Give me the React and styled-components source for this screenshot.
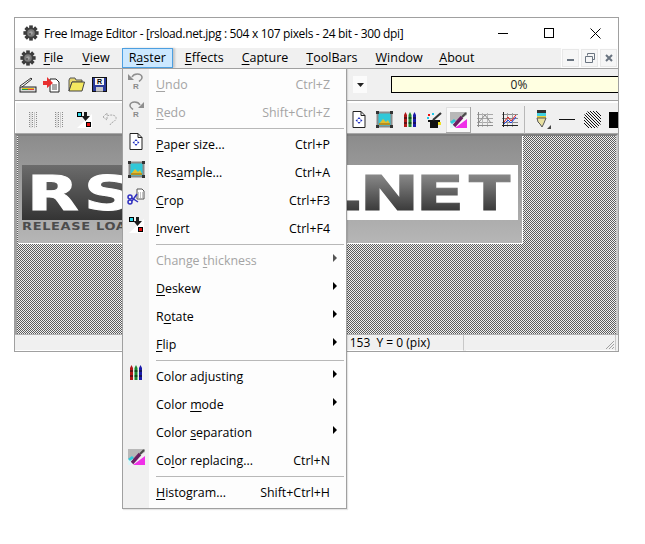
import React from "react";
import styled, { createGlobalStyle } from "styled-components";

const GlobalStyle = createGlobalStyle`
  html, body {
    margin: 0;
    padding: 0;
    background: #fff;
  }
  body {
    font-family: "Open Sans", "Noto Sans", sans-serif;
    font-size: 12px;
    color: #000;
    overflow: hidden;
  }
`;

const Page = styled.div`
  width: 645px;
  height: 544px;
  padding: 17px 0 0 14px;
  box-sizing: border-box;
  overflow: hidden;
  position: relative;
`;

const Window = styled.div`
  width: 605px;
  height: 335px;
  box-sizing: border-box;
  border: 1px solid #a0a0a0;
  display: flex;
  flex-direction: column;
  overflow: hidden;
  background: #f0f0f0;
`;

const TitleBar = styled.div`
  height: 30px;
  flex: none;
  background: #fff;
  display: flex;
  align-items: center;
  padding-left: 8px;
`;

const Title = styled.div`
  margin-left: 5px;
  flex: 1;
  white-space: nowrap;
  color: #000;
  letter-spacing: -0.34px;
`;

const CaptionButton = styled.div`
  width: 46px;
  height: 30px;
  display: flex;
  align-items: center;
  justify-content: center;
`;

const MenuBar = styled.div`
  height: 20px;
  flex: none;
  display: flex;
  align-items: center;
  background: #f0f0f0;
  padding-left: 5px;
  font-size: 12.5px;
`;

const MenuItem = styled.div`
  height: 20px;
  line-height: 19px;
  box-sizing: border-box;
  flex: none;
  padding: 0 9px;
  margin-left: ${(p) => p.$ml || 0}px;
  ${(p) =>
    p.$open &&
    `
    background: #cce8ff;
    border: 1px solid #4d9fe0;
    line-height: 18px;
    padding: 0 6px;
    margin: 0 3px;
    box-shadow: 2px 0 2px rgba(0,0,0,.18);
  `}
`;

const MdiGroup = styled.div`
  margin-left: auto;
  display: flex;
  gap: 2px;
  padding: 0 1px;
  height: 20px;
  align-items: center;
  background: #fdfdfd;
`;

const MdiButton = styled.div`
  width: 17px;
  height: 18px;
  box-sizing: border-box;
  border: 1px solid #e8e8e8;
  background: #f6f6f6;
  display: flex;
  align-items: center;
  justify-content: center;
`;

const Rule = styled.div`
  height: 1px;
  flex: none;
  background: #a0a0a0;
`;

const Toolbar = styled.div`
  height: 31px;
  flex: none;
  display: flex;
  align-items: center;
`;

const ToolPanel = styled.div`
  height: 34px;
  flex: none;
  box-sizing: border-box;
  display: flex;
  align-items: center;
  padding-top: 5px;
  border-top: 1px solid #a0a0a0;
  border-bottom: 1px solid #a8a8a8;
  box-shadow: inset 1px 2px 0 #fff;
`;

const Tool = styled.div`
  flex: none;
  margin-left: ${(p) => p.$ml || 0}px;
  width: ${(p) => p.$w || 16}px;
  height: ${(p) => p.$h || 16}px;
  display: flex;
  align-items: center;
  justify-content: center;
  ${(p) => p.$active && `background: #f9f9f9; box-shadow: inset -1px -1px 0 #a8a8a8, inset 1px 1px 0 #e0e0e0;`}
`;

const Combo = styled.div`
  flex: none;
  margin-left: 246px;
  width: 14px;
  height: 17px;
  background: #fbfbfb;
  display: flex;
  align-items: center;
  justify-content: center;
`;

const Progress = styled.div`
  flex: none;
  margin-left: 24px;
  width: 256px;
  height: 17px;
  box-sizing: border-box;
  border: 1px solid #000;
  background: #ffffe1;
  text-align: center;
  line-height: 15px;
  color: #222;
`;

const ToolDivider = styled.div`
  flex: none;
  width: 1px;
  height: 28px;
  background: #b8b8b8;
  margin-left: ${(p) => p.$ml}px;
`;

const Workspace = styled.div`
  flex: 1;
  min-height: 0;
  box-sizing: border-box;
  border-top: 2px solid #808080;
  border-left: 2px solid #a0a0a0;
  border-right: 2px solid #c8c8c8;
  background-color: #a6a6a6;
  background-image: repeating-conic-gradient(#5c5c5c 0% 25%, #f0f0f0 0% 50%);
  background-size: 2px 2px;
`;

const Picture = styled.svg`
  display: block;
  margin: 0 0 0 1px;
`;

const StatusBar = styled.div`
  height: 17px;
  flex: none;
  display: flex;
  border-top: 1px solid #b0b0b0;
  box-sizing: border-box;
  background: #f0f0f0;
`;

const StatusPane = styled.div`
  flex: ${(p) => (p.$grow ? 1 : "none")};
  width: ${(p) => p.$w || 0}px;
  margin-right: 2px;
  box-sizing: border-box;
  line-height: 15px;
  white-space: nowrap;
  text-align: right;
  padding-right: 33px;
  border-right: 1px solid #c8c8c8;
  border-bottom: 1px solid #fff;
  overflow: hidden;
  position: relative;
`;

const Grip = styled.svg`
  position: absolute;
  right: 0;
  bottom: 0;
`;

const Popup = styled.div`
  position: absolute;
  left: 122px;
  top: 68px;
  width: 225px;
  box-sizing: border-box;
  border: 1px solid #a0a0a0;
  padding: 2px 0 1px 0;
  font-size: 12.4px;
  background: linear-gradient(to right, #f0f0f0 26px, #fdfdfd 26px);
  box-shadow: 1px 1px 1px rgba(0, 0, 0, 0.1);
`;

const Row = styled.div`
  height: 28px;
  box-sizing: border-box;
  display: flex;
  align-items: center;
  position: relative;
  padding: 0 16px 2px 33px;
  color: ${(p) => (p.$disabled ? "#a4a4a4" : "#000")};
  white-space: nowrap;
`;

const RowIcon = styled.div`
  position: absolute;
  left: 4px;
  top: 1px;
  width: 18px;
  height: 18px;
  display: flex;
  align-items: center;
  justify-content: center;
`;

const Shortcut = styled.span`
  margin-left: auto;
`;

const Arrow = styled.span`
  position: absolute;
  right: 9px;
  top: 7px;
  width: 0;
  height: 0;
  border-left: 4px solid ${(p) => (p.$disabled ? "#555" : "#000")};
  border-top: 4px solid transparent;
  border-bottom: 4px solid transparent;
`;

const Separator = styled.div`
  height: 1px;
  margin: 1px 2px 2px 33px;
  background: #b8b8b8;
`;

const U = styled.span`
  text-decoration: underline;
  text-underline-offset: 2px;
  text-decoration-thickness: 1px;
`;

const Gear = () => {
  const teeth = [0, 45, 90, 135, 180, 225, 270, 315];
  return (
    <svg width="16" height="16" viewBox="0 0 16 16">
      {teeth.map((a) => (
        <rect key={a} x="6.2" y="0.4" width="3.6" height="4" fill="#3a3a3a" transform={`rotate(${a} 8 8)`} />
      ))}
      <circle cx="8" cy="8" r="5.6" fill="#3f3f3f" />
      <circle cx="8" cy="8" r="3.8" fill="#7c7c7c" />
      <circle cx="8" cy="8" r="1.8" fill="#a2a2a2" />
      <circle cx="7" cy="9" r="1" fill="#555" />
    </svg>
  );
};

const Scanner = () => (
  <svg width="18" height="16" viewBox="0 0 18 16">
    <path d="M1 9 L12 1 L13 2 L3 10" fill="#fff" stroke="#333" />
    <rect x="1" y="10" width="16" height="5" fill="#d8d8d8" stroke="#222" />
    <rect x="3" y="11" width="12" height="2" fill="#e8c020" />
    <rect x="3" y="12" width="6" height="1" fill="#20a040" />
    <rect x="9" y="12" width="6" height="1" fill="#e04040" />
  </svg>
);

const ImportDoc = () => (
  <svg width="18" height="17" viewBox="0 0 18 17">
    <path d="M7 3 H13 L16 6 V16 H7 Z" fill="#fff" stroke="#222" />
    <path d="M9 9 H14 M9 11 H14 M9 13 H14" stroke="#555" />
    <path d="M0 5 H4 V1 L10 7 L4 12 V9 H0 Z" fill="#e83030" />
  </svg>
);

const Folder = () => (
  <svg width="17" height="15" viewBox="0 0 17 15">
    <path d="M1 3 L2 1 H7 L8 3 H14 V5 H4 L1 14 Z" fill="#e8d870" stroke="#555" />
    <path d="M1 14 L4 5 H16.5 L14 14 Z" fill="#f4e860" stroke="#444" />
  </svg>
);

const Save = () => (
  <svg width="15" height="15" viewBox="0 0 15 15">
    <rect x="0.5" y="0.5" width="14" height="14" fill="#2a3a9a" stroke="#111" />
    <rect x="3" y="1" width="9" height="7" fill="#f4f4f4" />
    <text x="7.5" y="7" fontSize="7" fontWeight="700" textAnchor="middle" fontFamily="Liberation Sans">R</text>
    <rect x="4" y="10" width="7" height="4.5" fill="#c8c8c8" />
  </svg>
);

const Grips = () => (
  <svg width="10" height="16" viewBox="0 0 10 16">
    <path d="M1.5 0 V16 M4.5 0 V16 M8.5 0 V16" stroke="#8c8c8c" strokeDasharray="1 1" />
    <path d="M3 0 V16 M6.5 0 V16" stroke="#cccccc" />
  </svg>
);

const InvertIcon = () => (
  <svg width="15" height="16" viewBox="0 0 15 16">
    <path d="M0 16 L15 2 V16 Z" fill="#fff" />
    <rect x="0.5" y="0.5" width="4" height="4" fill="#30d8e8" stroke="#000" />
    <rect x="9.5" y="10.5" width="4" height="4" fill="#e81010" stroke="#000" />
    <path d="M7 0 H10 V4 H13 L8.5 9 L4.5 4 H7 Z" fill="#1a1a1a" />
  </svg>
);

const Lasso = () => (
  <svg width="16" height="15" viewBox="0 0 16 15">
    <path d="M1 5 L5 1 V4 C9 2 15 3 14 7 C13 10 9 10 8 13 M1 5 L5 8 V5" fill="none" stroke="#a8a8a8" strokeDasharray="2 1" />
  </svg>
);

const UndoIcon = ({ flip }) => (
  <svg width="18" height="18" viewBox="0 0 18 18">
    <g transform={flip ? "translate(18 0) scale(-1 1)" : undefined}>
      <path d="M5 5 C7 1 14 1 15 5 C15.4 7 14 8 12 9.5" fill="none" stroke="#8e8e8e" strokeWidth="1.5" />
      <path d="M1 2 L7 8 H1 Z" fill="#8e8e8e" />
    </g>
    <text x="9" y="17" fontSize="8" fontWeight="700" textAnchor="middle" fill="#8a8a8a" fontFamily="Liberation Sans">R</text>
  </svg>
);

const PageIcon = () => (
  <svg width="14" height="17" viewBox="0 0 14 17">
    <path d="M1 .5 H9 L13 4.5 V16.5 H1 Z M9 .5 V4.5 H13" fill="#fff" stroke="#222" />
    <path d="M7 6 L5.5 8 H8.5 Z M7 13 L5.5 11 H8.5 Z M3.5 9.5 L5.5 8 V11 Z M10.5 9.5 L8.5 8 V11 Z" fill="#2030c0" />
  </svg>
);

const ResampleIcon = () => (
  <svg width="17" height="17" viewBox="0 0 17 17">
    <rect x="1.5" y="1.5" width="14" height="14" fill="#30c8d8" stroke="#8a8a8a" strokeWidth="2" />
    <path d="M3 13 L7 8 L10 11 L12 9 L14 13 Z" fill="#e0c030" />
    <rect x="3" y="12" width="11" height="2" fill="#b89020" />
    <rect x="0" y="0" width="3" height="3" fill="#333" />
    <rect x="14" y="0" width="3" height="3" fill="#333" />
    <rect x="0" y="14" width="3" height="3" fill="#333" />
    <rect x="14" y="14" width="3" height="3" fill="#333" />
  </svg>
);

const Crayons = () => (
  <svg width="14" height="16" viewBox="0 0 14 16">
    <path d="M1 3 L2.5 0 L4 3 V15 H1 Z" fill="#b01818" />
    <path d="M5.5 3 L7 0 L8.5 3 V15 H5.5 Z" fill="#1a8a30" />
    <path d="M10 3 L11.5 0 L13 3 V15 H10 Z" fill="#1a1aaa" />
    <path d="M1 6 H4 M5.5 6 H8.5 M10 6 H13 M1 11 H4 M5.5 11 H8.5 M10 11 H13" stroke="#111" />
  </svg>
);

const Wand = () => (
  <svg width="15" height="16" viewBox="0 0 15 16">
    <rect x="3" y="9" width="8" height="7" fill="#111" />
    <rect x="1" y="8" width="12" height="2" fill="#111" />
    <path d="M6 8 L14 1" stroke="#333" strokeWidth="2.2" />
    <rect x="1" y="2" width="2" height="2" fill="#e81010" />
    <rect x="5" y="1" width="2" height="2" fill="#20c8e8" />
    <rect x="0" y="5" width="2" height="2" fill="#20c8e8" />
    <rect x="11" y="10" width="3" height="3" fill="#f0e020" />
  </svg>
);

const ColorReplace = () => (
  <svg width="17" height="16" viewBox="0 0 17 16">
    <path d="M0 0 H17 V3 L3 12 H0 Z" fill="#b8b8b8" />
    <path d="M0 10 H6 L3 16 H0 Z" fill="#dff6f8" />
    <path d="M0 10 L4 7 L6 9 L2 12 Z" fill="#30c8d8" />
    <path d="M5 16 L17 7 V16 Z" fill="#f030e8" />
    <path d="M4 14 L12 5" stroke="#6a1f62" strokeWidth="3.4" />
    <path d="M12 5 L16 1" stroke="#4a4a4a" strokeWidth="2" />
  </svg>
);

const GridIcon = ({ chart }) => (
  <svg width="16" height="15" viewBox="0 0 16 15">
    <path d="M0 2.5 H16 M0 6.5 H16 M0 10.5 H16" stroke={chart ? "#8a8a8a" : "#a8a8a8"} />
    <path d="M5.5 1 V15 M10.5 1 V15" stroke={chart ? "#a0a0a0" : "#b8b8b8"} />
    <path d="M0 13.5 H16" stroke={chart ? "#222" : "#8a8a8a"} />
    <path d="M1.5 0 V15" stroke={chart ? "#222" : "#8a8a8a"} />
    {chart ? (
      <>
        <path d="M2 10 L6 5 L9 9 L14 3" stroke="#e02020" fill="none" />
        <path d="M2 12 L6 8 L9 11 L14 5" stroke="#2040e0" fill="none" />
      </>
    ) : (
      <path d="M2 10 L8 3 L14 11" stroke="#8a8a8a" fill="none" />
    )}
  </svg>
);

const Brush = () => (
  <svg width="16" height="20" viewBox="0 0 16 20">
    <rect x="1" y="0" width="9" height="3" fill="#303030" />
    <rect x="1" y="3" width="9" height="3" fill="#40d0e0" />
    <rect x="1" y="6" width="9" height="2" fill="#e8d040" />
    <path d="M1 8 H10 L8 13 L6 17 L4 14 L2 12 Z" fill="#e8e0a0" stroke="#555" />
    <path d="M11 19 L15 19 L15 15 Z" fill="#444" />
  </svg>
);

const Hatch = () => (
  <svg width="17" height="17" viewBox="0 0 17 17" shapeRendering="crispEdges">
    <defs>
      <clipPath id="hatchClip">
        <path d="M4 0 H13 L17 4 V13 L13 17 H4 L0 13 V4 Z" />
      </clipPath>
    </defs>
    <g clipPath="url(#hatchClip)" stroke="#111">
      {[-15, -12, -9, -6, -3, 0, 3, 6, 9, 12, 15].map((d) => (
        <line key={d} x1={d} y1="0" x2={d + 17} y2="17" />
      ))}
    </g>
  </svg>
);

const Scissors = () => (
  <svg width="18" height="18" viewBox="0 0 18 18">
    <path d="M10 1 H15 L17 3 V11 H10 Z" fill="#fff" stroke="#555" />
    <path d="M11 5 H16 M11 7 H16 M11 9 H16" stroke="#888" strokeDasharray="1 1" />
    <circle cx="3" cy="9" r="2" fill="none" stroke="#3030c0" strokeWidth="1.5" />
    <circle cx="3" cy="14" r="2" fill="none" stroke="#3030c0" strokeWidth="1.5" />
    <path d="M5 10 L11 14 M5 13 L10 6" stroke="#3030c0" strokeWidth="1.5" />
  </svg>
);

const menuRows = [
  { text: ["", "U", "ndo"], key: "Ctrl+Z", disabled: true, icon: <UndoIcon /> },
  { text: ["", "R", "edo"], key: "Shift+Ctrl+Z", disabled: true, icon: <UndoIcon flip /> },
  "sep",
  { text: ["", "P", "aper size..."], key: "Ctrl+P", icon: <PageIcon /> },
  { text: ["Res", "a", "mple..."], key: "Ctrl+A", icon: <ResampleIcon /> },
  { text: ["", "C", "rop"], key: "Ctrl+F3", icon: <Scissors /> },
  { text: ["", "I", "nvert"], key: "Ctrl+F4", icon: <InvertIcon /> },
  "sep",
  { text: ["Change ", "t", "hickness"], sub: true, disabled: true },
  { text: ["", "D", "eskew"], sub: true },
  { text: ["R", "o", "tate"], sub: true },
  { text: ["", "F", "lip"], sub: true },
  "sep",
  { text: ["Color ad", "j", "usting"], sub: true, icon: <Crayons /> },
  { text: ["Color ", "m", "ode"], sub: true },
  { text: ["Color ", "s", "eparation"], sub: true },
  { text: ["Co", "l", "or replacing..."], key: "Ctrl+N", icon: <ColorReplace /> },
  "sep",
  { text: ["", "H", "istogram..."], key: "Shift+Ctrl+H" },
];

const App = () => (
  <Page>
    <GlobalStyle />
    <Window>
      <TitleBar>
        <Gear />
        <Title>Free Image Editor - [rsload.net.jpg : 504 x 107 pixels - 24 bit - 300 dpi]</Title>
        <CaptionButton>
          <svg width="10" height="10"><path d="M0 5.5 H10" stroke="#000" /></svg>
        </CaptionButton>
        <CaptionButton>
          <svg width="10" height="10"><rect x=".5" y=".5" width="9" height="9" fill="none" stroke="#000" /></svg>
        </CaptionButton>
        <CaptionButton>
          <svg width="11" height="11"><path d="M.5 .5 L10.5 10.5 M10.5 .5 L.5 10.5" stroke="#000" /></svg>
        </CaptionButton>
      </TitleBar>
      <MenuBar>
        <Gear />
        <MenuItem $ml={-1.5}><U>F</U>ile</MenuItem>
        <MenuItem $ml={1}><U>V</U>iew</MenuItem>
        <MenuItem $open>R<U>a</U>ster</MenuItem>
        <MenuItem><U>E</U>ffects</MenuItem>
        <MenuItem><U>C</U>apture</MenuItem>
        <MenuItem><U>T</U>oolBars</MenuItem>
        <MenuItem><U>W</U>indow</MenuItem>
        <MenuItem $ml={-1.5}><U>A</U>bout</MenuItem>
        <MdiGroup>
          <MdiButton>
            <svg width="9" height="8"><rect x="1" y="5" width="7" height="2" fill="#6a7480" /></svg>
          </MdiButton>
          <MdiButton>
            <svg width="10" height="10"><path d="M2.5 2.5 V.5 H9.5 V6.5 H7.5 M.5 3.5 H7.5 V9.5 H.5 Z" fill="none" stroke="#6a7480" /></svg>
          </MdiButton>
          <MdiButton>
            <svg width="8" height="8"><path d="M1 1 L7 7 M7 1 L1 7" stroke="#6a7480" strokeWidth="2" /></svg>
          </MdiButton>
        </MdiGroup>
      </MenuBar>
      <Rule />
      <Toolbar>
        <Tool $ml={4} $w={18}><Scanner /></Tool>
        <Tool $ml={6} $w={18}><ImportDoc /></Tool>
        <Tool $ml={6} $w={18}><Folder /></Tool>
        <Tool $ml={7} $w={15}><Save /></Tool>
        <Combo>
          <svg width="7" height="4"><path d="M0 0 H7 L3.5 4 Z" fill="#222" /></svg>
        </Combo>
        <Progress>0%</Progress>
      </Toolbar>
      <ToolPanel>
        <Tool $ml={13} $w={10}><Grips /></Tool>
        <Tool $ml={16} $w={10}><Grips /></Tool>
        <Tool $ml={13} $w={15}><InvertIcon /></Tool>
        <Tool $ml={10}><Lasso /></Tool>
        <Tool $ml={234} $w={14} $h={17}><PageIcon /></Tool>
        <Tool $ml={10} $w={17} $h={17}><ResampleIcon /></Tool>
        <Tool $ml={10} $w={14}><Crayons /></Tool>
        <Tool $ml={10} $w={15}><Wand /></Tool>
        <Tool $ml={4} $w={25} $h={26} $active><ColorReplace /></Tool>
        <Tool $ml={6}><GridIcon /></Tool>
        <Tool $ml={9}><GridIcon chart /></Tool>
        <ToolDivider $ml={6} />
        <Tool $ml={11} $w={16} $h={20}><Brush /></Tool>
        <Tool $ml={7} $w={16}>
          <svg width="16" height="3"><path d="M0 1.5 H16" stroke="#111" /></svg>
        </Tool>
        <Tool $ml={9} $w={17} $h={17}><Hatch /></Tool>
        <Tool $ml={8} $w={16}>
          <svg width="16" height="16"><rect width="16" height="16" fill="#000" /></svg>
        </Tool>
      </ToolPanel>
      <Workspace>
        <Picture width="505" height="108" viewBox="0 0 505 108">
          <defs>
            <linearGradient id="back" x1="0" y1="0" x2="0" y2="1">
              <stop offset="0" stopColor="#8c8c8c" />
              <stop offset="1" stopColor="#b6b6b6" />
            </linearGradient>
            <linearGradient id="dark" x1="0" y1="0" x2="0" y2="1">
              <stop offset="0" stopColor="#6c6c6c" />
              <stop offset="1" stopColor="#343434" />
            </linearGradient>
            <linearGradient id="letters" gradientUnits="userSpaceOnUse" x1="0" y1="-36" x2="0" y2="0">
              <stop offset="0" stopColor="#8a8a8a" />
              <stop offset="1" stopColor="#3c3c3c" />
            </linearGradient>
          </defs>
          <rect width="505" height="108" fill="#fff" />
          <rect width="504" height="107" fill="url(#back)" />
          <rect x="4" y="29" width="496" height="55" fill="#fff" />
          <rect x="4" y="29" width="200" height="55" fill="url(#dark)" />
          <g fontFamily="DejaVu Sans" fontWeight="700" fontSize="48" strokeWidth="1">
            <text transform="translate(0 74) scale(1.4 1)" x="6.4 47.1" fill="#fff" stroke="#fff">RS</text>
            <text transform="translate(0 74) scale(1.49 1)" x="215.1 229.2 266.8" fill="url(#letters)" stroke="url(#letters)">.NE</text>
            <text transform="translate(451 74) scale(1.26 1)" fill="url(#letters)" stroke="url(#letters)">T</text>
          </g>
          <text transform="translate(4 94) scale(1.3 1)" fontFamily="DejaVu Sans" fontWeight="700" fontSize="10" letterSpacing="0.5" fill="#4c4c4c">RELEASE LOAD</text>
        </Picture>
      </Workspace>
      <StatusBar>
        <StatusPane $w={449}>X = 153&nbsp;&nbsp;Y = 0 (pix)</StatusPane>
        <StatusPane $grow>
          <Grip width="12" height="12" viewBox="0 0 12 12">
            <path d="M11 3 L3 11 M11 6 L6 11 M11 9 L9 11" stroke="#a0a0a0" />
          </Grip>
        </StatusPane>
      </StatusBar>
    </Window>
    <Popup>
      {menuRows.map((row, i) =>
        row === "sep" ? (
          <Separator key={i} />
        ) : (
          <Row key={i} $disabled={row.disabled}>
            {row.icon && <RowIcon>{row.icon}</RowIcon>}
            <span>
              {row.text[0]}
              <U>{row.text[1]}</U>
              {row.text[2]}
            </span>
            {row.key && <Shortcut>{row.key}</Shortcut>}
            {row.sub && <Arrow $disabled={row.disabled} />}
          </Row>
        )
      )}
    </Popup>
  </Page>
);

export default App;
